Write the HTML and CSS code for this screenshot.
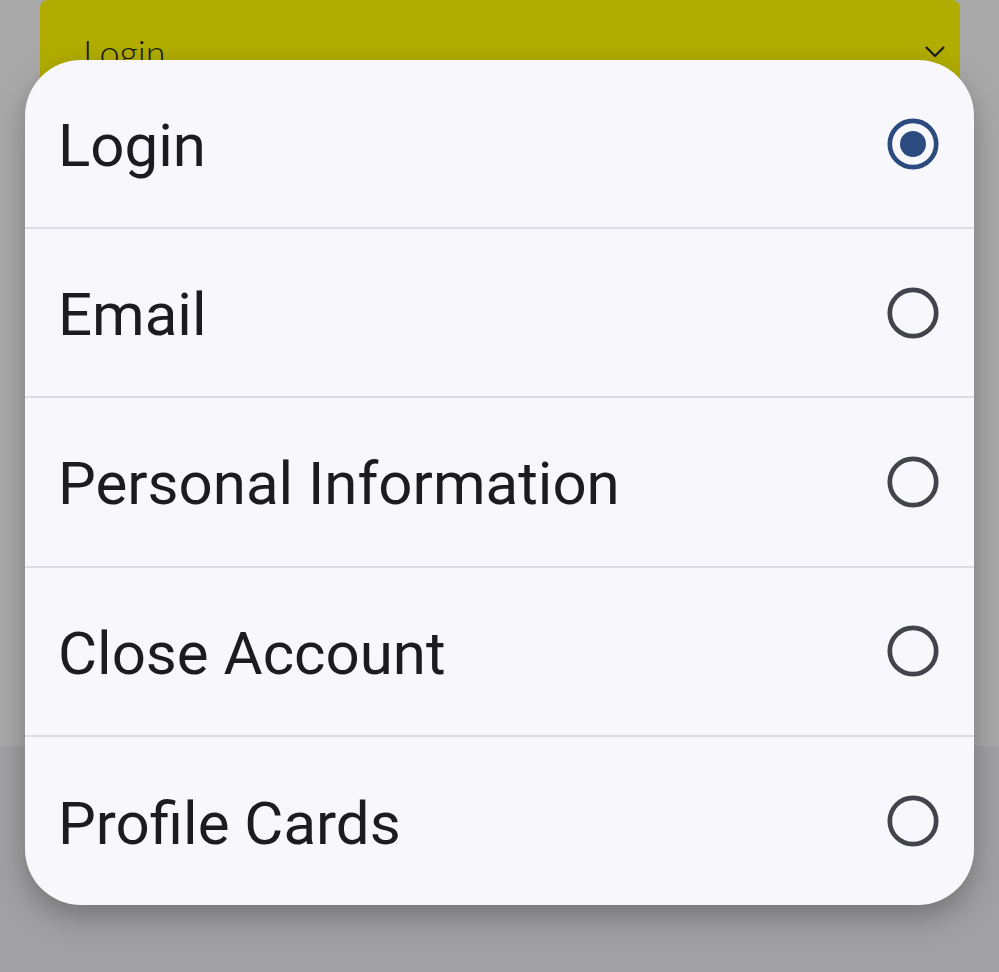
FILE: index.html
```html
<!DOCTYPE html>
<html lang="en">
<head>
    <meta charset="UTF-8">
    <meta name="viewport" content="width=device-width, initial-scale=1.0">
    <title>Settings - Section picker</title>
    <link rel="stylesheet" href="styles.css">
</head>
<body>
    <div class="screen">
        <div class="backdrop-top">
            <div class="select-field">
                <span class="select-label">Login</span>
                <svg class="chevron" width="22" height="14" viewBox="0 0 22 14">
                    <path d="M2 2 L11 11 L20 2" fill="none" stroke="#1a1a1a" stroke-width="2.2"/>
                </svg>
            </div>
        </div>
        <div class="backdrop-bottom"></div>

        <!-- Dialog met opties -->
        <div class="dialog">
            <div class="option">
                <span class="option-label">Login</span>
                <svg class="radio" width="56" height="56" viewBox="0 0 56 56">
                    <circle cx="28" cy="28" r="23.2" fill="none" stroke="#2b4a80" stroke-width="4.7"/>
                    <circle cx="28" cy="28" r="13" fill="#2b4a80"/>
                </svg>
            </div>
            <div class="option">
                <span class="option-label">Email</span>
                <svg class="radio" width="56" height="56" viewBox="0 0 56 56">
                    <circle cx="28" cy="28" r="23.2" fill="none" stroke="#43444b" stroke-width="4.7"/>
                </svg>
            </div>
            <div class="option">
                <span class="option-label">Personal Information</span>
                <svg class="radio" width="56" height="56" viewBox="0 0 56 56">
                    <circle cx="28" cy="28" r="23.2" fill="none" stroke="#43444b" stroke-width="4.7"/>
                </svg>
            </div>
            <div class="option">
                <span class="option-label">Close Account</span>
                <svg class="radio" width="56" height="56" viewBox="0 0 56 56">
                    <circle cx="28" cy="28" r="23.2" fill="none" stroke="#43444b" stroke-width="4.7"/>
                </svg>
            </div>
            <div class="option">
                <span class="option-label">Profile Cards</span>
                <svg class="radio" width="56" height="56" viewBox="0 0 56 56">
                    <circle cx="28" cy="28" r="23.2" fill="none" stroke="#43444b" stroke-width="4.7"/>
                </svg>
            </div>
        </div>
    </div>
</body>
</html>
```

FILE: styles.css
```css
body {
    margin: 0;
    font-family: Roboto, "Noto Sans", sans-serif;
    background: #a1a1a3;
}

.screen {
    position: relative;
    width: 999px;
    height: 972px;
    overflow: hidden;
    display: flex;
    flex-direction: column;
}

.backdrop-top {
    height: 746px;
    background: #a9a9a9;
    padding: 0 39px 0 40px;
}

.backdrop-bottom {
    flex: 1;
    background: #a1a1a3;
}

.select-field {
    height: 110px;
    background: #b1ad00;
    border-radius: 8px;
    display: flex;
    align-items: flex-start;
    justify-content: space-between;
    padding: 30px 14px 0 43px;
    box-sizing: border-box;
}

.select-label {
    font-family: Lato, sans-serif;
    font-weight: 300;
    font-size: 36px;
    color: #1a1a1a;
}

.chevron {
    margin-top: 15px;
}

.dialog {
    position: absolute;
    left: 25px;
    top: 60px;
    width: 949px;
    height: 845px;
    background: #f7f7fc;
    border-radius: 56px;
    box-shadow: 0 12px 30px rgba(0, 0, 0, 0.28);
    overflow: hidden;
    display: flex;
    flex-direction: column;
}

.option {
    height: 169.2px;
    flex: none;
    display: flex;
    align-items: center;
    justify-content: space-between;
    padding: 4px 33px 0 33px;
    border-bottom: 2px solid #dcdce2;
    box-sizing: border-box;
}

.option:last-child {
    border-bottom: none;
}

.option-label {
    font-size: 60px;
    color: #1c1b1f;
}

.radio {
    margin-top: -4px;
}
```
